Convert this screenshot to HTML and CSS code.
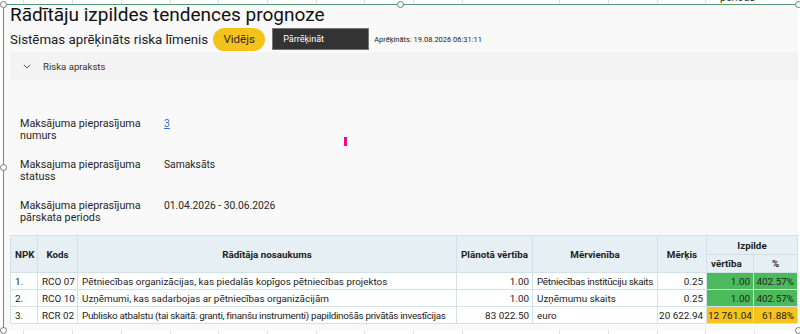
FILE: index.html
```html
<!DOCTYPE html>
<html lang="lv">
<head>
<meta charset="utf-8">
<title>Rādītāju izpildes tendences prognoze</title>
<link rel="stylesheet" href="styles.css">
</head>
<body>
<div class="sheet">
  <span class="cell-text">periods</span>
  <div class="frame">
    <h1 class="title">Rādītāju izpildes tendences prognoze</h1>
    <div class="risk-line">
      <span class="risk-label">Sistēmas aprēķināts riska līmenis</span>
      <span class="pill">Vidējs</span>
      <button class="recalc" type="button">Pārrēķināt</button>
      <span class="stamp">Aprēķināts: 19.08.2026 06:31:11</span>
    </div>
    <div class="accordion">
      <svg class="chev" width="8" height="5" viewBox="0 0 8 5"><polyline points="0.8,0.8 4,4 7.2,0.8" fill="none" stroke="#555" stroke-width="1"/></svg>
      <span>Riska apraksts</span>
    </div>
    <div class="fields">
      <div class="label">Maksājuma pieprasījuma<br>numurs</div>
      <div class="value"><a class="link" href="#">3</a></div>
      <div class="label">Maksajuma pieprasījuma<br>statuss</div>
      <div class="value">Samaksāts</div>
      <div class="label">Maksājuma pieprasījuma<br>pārskata periods</div>
      <div class="value">01.04.2026 - 30.06.2026</div>
    </div>
    <span class="marker"></span>
    <table class="grid">
      <colgroup>
        <col class="c-npk"><col class="c-kods"><col class="c-name"><col class="c-plan"><col class="c-unit"><col class="c-goal"><col class="c-val"><col class="c-pct">
      </colgroup>
      <thead>
        <tr class="h1">
          <th rowspan="2">NPK</th>
          <th rowspan="2">Kods</th>
          <th rowspan="2">Rādītāja nosaukums</th>
          <th rowspan="2">Plānotā vērtība</th>
          <th rowspan="2">Mērvienība</th>
          <th rowspan="2">Mērķis</th>
          <th colspan="2">Izpilde</th>
        </tr>
        <tr class="h2">
          <th>vērtība</th>
          <th>%</th>
        </tr>
      </thead>
      <tbody>
        <tr>
          <td>1.</td><td>RCO 07</td><td>Pētniecības organizācijas, kas piedalās kopīgos pētniecības projektos</td>
          <td class="num">1.00</td><td class="tight">Pētniecības institūciju skaits</td><td class="num">0.25</td>
          <td class="num good">1.00</td><td class="num good">402.57%</td>
        </tr>
        <tr>
          <td>2.</td><td>RCO 10</td><td>Uzņēmumi, kas sadarbojas ar pētniecības organizācijām</td>
          <td class="num">1.00</td><td>Uzņēmumu skaits</td><td class="num">0.25</td>
          <td class="num good">1.00</td><td class="num good">402.57%</td>
        </tr>
        <tr>
          <td>3.</td><td>RCR 02</td><td class="tight">Publisko atbalstu (tai skaitā: granti, finanšu instrumenti) papildinošās privātās investīcijas</td>
          <td class="num">83 022.50</td><td>euro</td><td class="num">20 622.94</td>
          <td class="num warn">12 761.04</td><td class="num warn">61.88%</td>
        </tr>
      </tbody>
    </table>
  </div>
  <span class="handle h-tl"></span>
  <span class="handle h-tm"></span>
  <span class="handle h-tr"></span>
  <span class="handle h-ml"></span>
  <span class="handle h-bl"></span>
  <span class="handle h-br"></span>
</div>
</body>
</html>
```

FILE: styles.css
```css
* { box-sizing: border-box; }

html, body {
  margin: 0;
  padding: 0;
  width: 800px;
  height: 334px;
  overflow: hidden;
}

body {
  background-color: #ffffff;
  background-image: repeating-linear-gradient(to right, transparent 0, transparent 23.5px, #e1e1e1 23.5px, #e1e1e1 24.5px, transparent 24.5px, transparent 48.7px);
  font-family: Roboto, "Noto Sans", "Liberation Sans", sans-serif;
  color: #252525;
}

.sheet {
  position: relative;
  width: 800px;
  height: 334px;
  padding: 4px 2px 0 3px;
}

.cell-text {
  position: absolute;
  left: 720px;
  top: -8px;
  font-size: 10.5px;
  line-height: 11px;
  color: #333;
}

.frame {
  position: relative;
  height: 326px;
  background: #f9f9f9;
  border-top: 1px solid #4f9e6b;
  border-left: 1px solid #4f9e6b;
  padding: 0 0 0 6px;
  overflow: hidden;
}

.title {
  margin: 0;
  font-weight: 400;
  font-size: 19px;
  line-height: 20px;
  color: #111;
}

.risk-line {
  display: flex;
  align-items: center;
  height: 24px;
  margin-top: 2px;
}

.risk-label {
  font-size: 13.3px;
  color: #222;
}

.pill {
  margin-left: 5px;
  width: 52px;
  height: 23px;
  border-radius: 12px;
  background: #f2c31a;
  display: flex;
  align-items: center;
  justify-content: center;
  font-size: 11.5px;
  color: #2a2a2a;
}

.recalc {
  margin-left: 7px;
  width: 97px;
  height: 22px;
  background: #333333;
  border: 1px solid #777;
  color: #ffffff;
  font-family: inherit;
  font-size: 9px;
  text-align: left;
  padding: 0 0 0 10px;
}

.stamp {
  margin-left: 5px;
  font-size: 7.5px;
  color: #222;
}

.accordion {
  margin-top: 2px;
  height: 27px;
  background: #f3f3f3;
  display: flex;
  align-items: center;
  padding-left: 13px;
  font-size: 9.6px;
  color: #333;
  box-shadow: 0 -1px 1px #f6f6f6;
}

.chev {
  margin-right: 12px;
}

.fields {
  display: grid;
  grid-template-columns: 144px 1fr;
  row-gap: 17px;
  margin-top: 38px;
  padding-left: 10px;
  font-size: 10.8px;
  line-height: 12px;
  color: #262626;
}

.value {
  font-size: 10.3px;
}

.link {
  color: #2f6fd6;
}

.marker {
  position: absolute;
  left: 340px;
  top: 132px;
  width: 3px;
  height: 9px;
  background: #ec0d8b;
}

.grid {
  margin-top: 11px;
  width: 787px;
  table-layout: fixed;
  border-collapse: collapse;
  font-size: 9.9px;
  color: #222;
}

.c-npk { width: 27px; }
.c-kods { width: 40px; }
.c-name { width: 379px; }
.c-plan { width: 76px; }
.c-unit { width: 125px; }
.c-goal { width: 49px; }
.c-val { width: 47px; }
.c-pct { width: 44px; }

.grid th, .grid td {
  border: 1px solid #cfe2ea;
  padding: 0 3px 0 4px;
  white-space: nowrap;
  overflow: hidden;
}

.grid th {
  background: #e6f0f4;
  font-weight: 700;
  font-size: 9.8px;
  text-align: center;
  padding: 0 2px;
}

.grid thead th:first-child { text-align: left; padding-left: 4px; }

.grid .h1 { height: 19px; }
.grid .h2 { height: 18px; }

.grid td {
  background: #ffffff;
  height: 17px;
}

.grid td.tight { letter-spacing: -0.3px; }

.grid td.num { text-align: right; padding: 0 3px 0 1px; }

.grid td.good { background: #4cba5c; }
.grid td.warn { background: #f5c41c; }

.handle {
  position: absolute;
  width: 7px;
  height: 7px;
  border-radius: 50%;
  background: #ffffff;
  border: 1px solid #777;
}

.h-tl { left: 0; top: 1px; }
.h-tm { left: 397px; top: 1px; }
.h-tr { left: 795px; top: 1px; }
.h-ml { left: 0; top: 164px; }
.h-bl { left: 0; top: 327px; }
.h-br { left: 795px; top: 327px; }
```
